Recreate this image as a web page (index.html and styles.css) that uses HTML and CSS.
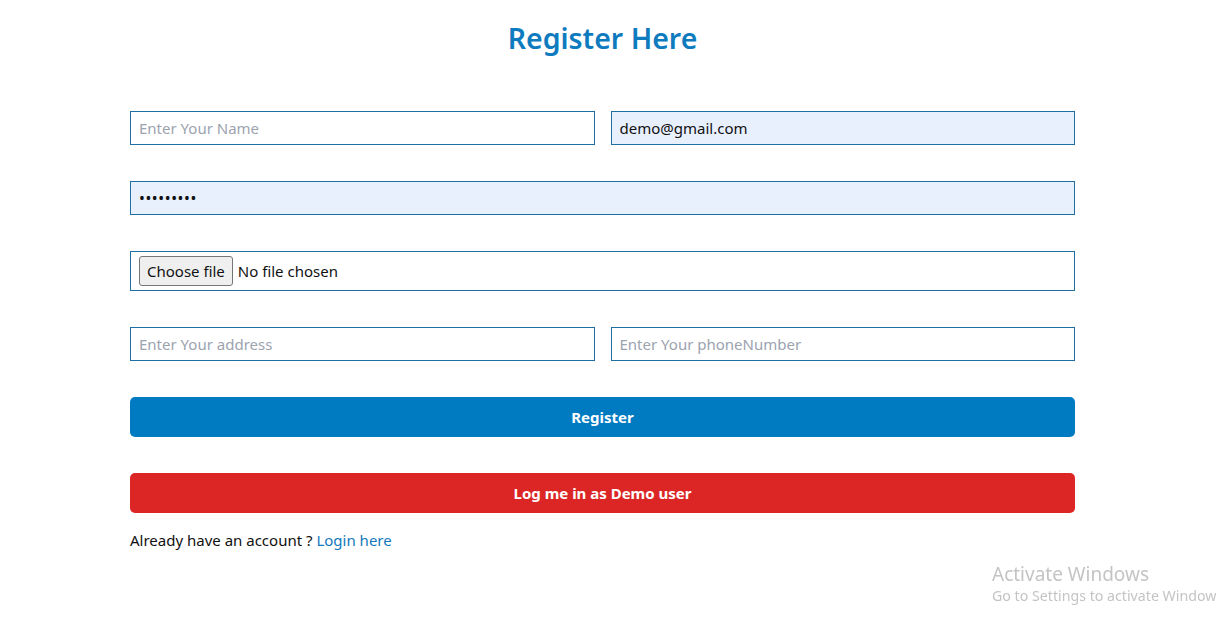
FILE: index.html
```html
<!DOCTYPE html>
<html lang="en">
<head>
<meta charset="utf-8">
<title>Register</title>
<link rel="stylesheet" href="styles.css">
</head>
<body>
<main class="page">
  <h1 class="title">Register Here</h1>
  <form class="form">
    <div class="row two">
      <input class="field" type="text" placeholder="Enter Your Name">
      <input class="field filled" type="email" value="demo@gmail.com">
    </div>
    <div class="row">
      <input class="field filled pw" type="password" value="123456789">
    </div>
    <div class="row">
      <div class="file-field">
        <button type="button" class="file-btn">Choose file</button>
        <span class="file-label">No file chosen</span>
      </div>
    </div>
    <div class="row two">
      <input class="field" type="text" placeholder="Enter Your address">
      <input class="field" type="text" placeholder="Enter Your phoneNumber">
    </div>
    <button type="button" class="btn btn-blue">Register</button>
    <button type="button" class="btn btn-red">Log me in as Demo user</button>
    <p class="note">Already have an account ? <a href="#" class="link">Login here</a></p>
  </form>
</main>
<div class="activate">
  <div class="act-title">Activate Windows</div>
  <div class="act-sub">Go to Settings to activate Window</div>
</div>
</body>
</html>
```

FILE: styles.css
```css
html, body {
  margin: 0;
  padding: 0;
  background: #ffffff;
  overflow: hidden;
}
body {
  font-family: "Noto Sans", "Open Sans", sans-serif;
  color: #111;
  width: 1218px;
  height: 619px;
}
.page {
  width: 945px;
  margin-left: 130px;
  padding-top: 18px;
}
.title {
  margin: 0;
  text-align: center;
  font-size: 28.5px;
  font-weight: 600;
  color: #0f7bbf;
  line-height: 40px;
}
.form {
  margin-top: 53px;
  display: flex;
  flex-direction: column;
  gap: 36px;
}
.row {
  display: flex;
  gap: 16px;
}
.field {
  flex: 1;
  min-width: 0;
  box-sizing: border-box;
  height: 34px;
  border: 1px solid #1f6fa3;
  border-radius: 0;
  padding: 0 8px;
  font-family: inherit;
  font-size: 15px;
  color: #111;
  background: #fff;
  outline: none;
  margin: 0;
}
.field::placeholder {
  color: #9ca3af;
}
.field.filled {
  background: #e8f0fe;
}
.pw {
  font-size: 15.5px;
  letter-spacing: 0.6px;
}
.file-field {
  flex: 1;
  box-sizing: border-box;
  height: 40px;
  border: 1px solid #1f6fa3;
  display: flex;
  align-items: center;
  padding: 0 8px;
  gap: 5px;
}
.file-btn {
  height: 30px;
  box-sizing: border-box;
  padding: 0 7px;
  font-family: inherit;
  font-size: 15px;
  color: #111;
  background: #efefef;
  border: 1px solid #767676;
  border-radius: 3px;
}
.file-label {
  font-size: 15px;
  color: #111;
}
.btn {
  box-sizing: border-box;
  height: 40px;
  width: 100%;
  border: none;
  border-radius: 5px;
  color: #fff;
  font-family: inherit;
  font-weight: 700;
  font-size: 15px;
}
.btn-blue {
  background: #007bc2;
}
.btn-red {
  background: #dc2626;
}
.note {
  margin: -19px 0 0;
  font-size: 15px;
  color: #111;
}
.link {
  color: #1479bd;
  text-decoration: none;
}
.activate {
  position: fixed;
  left: 992px;
  top: 562px;
  white-space: nowrap;
  color: #c4c4c4;
}
.act-title {
  font-size: 19px;
  line-height: 24px;
}
.act-sub {
  font-size: 14.2px;
  line-height: 20px;
}
```
